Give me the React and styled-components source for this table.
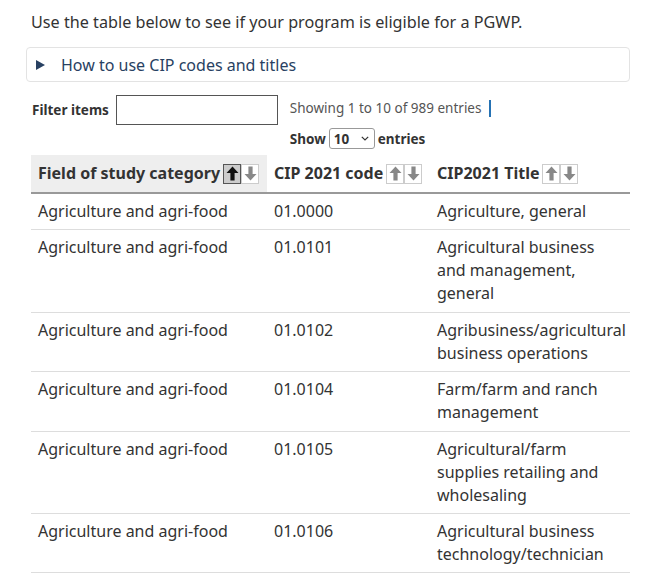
import { styled, createGlobalStyle } from "styled-components";

const GlobalStyle = createGlobalStyle`
    body {
        margin: 0;
        background: #fff;
        font-family: "Noto Sans", "DejaVu Sans", sans-serif;
        color: #333;
    }
`;

const rows = [
    ["Agriculture and agri-food", "01.0000", "Agriculture, general"],
    ["Agriculture and agri-food", "01.0101", "Agricultural business and management, general"],
    ["Agriculture and agri-food", "01.0102", "Agribusiness/agricultural business operations"],
    ["Agriculture and agri-food", "01.0104", "Farm/farm and ranch management"],
    ["Agriculture and agri-food", "01.0105", "Agricultural/farm supplies retailing and wholesaling"],
    ["Agriculture and agri-food", "01.0106", "Agricultural business technology/technician"],
];

const Arrow = ({ down, color }) => (
    <svg width="13" height="15" viewBox="0 0 13 15">
        <g transform={down ? "rotate(180 6.5 7.5)" : undefined}>
            <path d="M6.5 0.5 L12.5 7 L8.6 7 L8.6 14.5 L4.4 14.5 L4.4 7 L0.5 7 Z" fill={color} />
        </g>
    </svg>
);

const SortButtons = ({ active }) => (
    <SortGroup>
        <SortBtn $active={active}>
            <Arrow color={active ? "#111" : "#888"} />
        </SortBtn>
        <SortBtn>
            <Arrow down color="#888" />
        </SortBtn>
    </SortGroup>
);

const App = () => {
    return (
        <Page>
            <GlobalStyle />
            <Intro>Use the table below to see if your program is eligible for a PGWP.</Intro>
            <Details>
                <Summary>
                    <Triangle />
                    How to use CIP codes and titles
                </Summary>
            </Details>

            <Controls>
                <FilterLabel>
                    Filter items
                    <FilterInput type="text" />
                </FilterLabel>
                <Info>
                    <Showing>
                        Showing 1 to 10 of 989 entries
                        <Caret />
                    </Showing>
                    <Length>
                        Show
                        <SelectBox>
                            10
                            <Chevron viewBox="0 0 8 5" width="8" height="5">
                                <path d="M0.8 0.8 L4 4 L7.2 0.8" fill="none" stroke="#333" strokeWidth="1.2" />
                            </Chevron>
                        </SelectBox>
                        entries
                    </Length>
                </Info>
            </Controls>

            <Table>
                <colgroup>
                    <col style={{ width: 236 }} />
                    <col style={{ width: 163 }} />
                    <col style={{ width: 200 }} />
                </colgroup>
                <thead>
                    <tr>
                        <Th $sorted>
                            <HeadInner>Field of study category<SortButtons active /></HeadInner>
                        </Th>
                        <Th>
                            <HeadInner>CIP 2021 code<SortButtons /></HeadInner>
                        </Th>
                        <Th>
                            <HeadInner>CIP2021 Title<SortButtons /></HeadInner>
                        </Th>
                    </tr>
                </thead>
                <tbody>
                    {rows.map(([field, code, title]) => (
                        <tr key={code}>
                            <Td>{field}</Td>
                            <Td>{code}</Td>
                            <Td>{title}</Td>
                        </tr>
                    ))}
                </tbody>
            </Table>
        </Page>
    );
};

const Page = styled.div`
    width: 660px;
    height: 584px;
    overflow: hidden;
    box-sizing: border-box;
    padding: 11px 30px 0 31px;
`;

const Intro = styled.p`
    margin: 0;
    font-size: 16.2px;
    line-height: 23px;
    color: #333;
`;

const Details = styled.details`
    margin: 13px 0 0 -5px;
    border: 1px solid #e3e3e3;
    border-radius: 4px;
`;

const Summary = styled.summary`
    list-style: none;
    display: flex;
    align-items: center;
    height: 33px;
    padding-left: 9px;
    font-size: 16px;
    color: #284162;
    cursor: pointer;

    &::-webkit-details-marker { display: none; }
`;

const Triangle = styled.span`
    width: 0;
    height: 0;
    border-top: 5px solid transparent;
    border-bottom: 5px solid transparent;
    border-left: 9px solid #284162;
    margin-right: 16px;
`;

const Controls = styled.div`
    display: flex;
    align-items: flex-start;
    margin-top: 13px;
`;

const FilterLabel = styled.label`
    display: flex;
    align-items: center;
    gap: 7px;
    font-size: 13.5px;
    font-weight: bold;
    color: #333;
    padding-left: 1px;
`;

const FilterInput = styled.input`
    width: 154px;
    height: 28px;
    margin: 0;
    padding: 0 3px;
    box-sizing: content-box;
    border: 1px solid #555;
    border-radius: 0;
    background: #fff;
    font-family: inherit;

    &:focus { outline: none; }
`;

const Info = styled.div`
    display: flex;
    flex-direction: column;
    gap: 11px;
    margin-left: 12px;
    margin-top: 4px;
`;

const Showing = styled.div`
    display: flex;
    align-items: center;
    font-size: 13.5px;
    line-height: 18px;
    color: #555;
`;

const Caret = styled.span`
    display: inline-block;
    width: 2px;
    height: 17px;
    background: #2572b4;
    margin-left: 8px;
`;

const Length = styled.div`
    display: flex;
    align-items: center;
    gap: 3px;
    font-size: 13.5px;
    font-weight: bold;
    color: #333;
`;

const SelectBox = styled.span`
    display: inline-flex;
    align-items: center;
    justify-content: space-between;
    width: 35px;
    height: 19px;
    padding: 0 5px 0 4px;
    border: 1px solid #999;
    border-radius: 3px;
    font-size: 13.5px;
    font-weight: bold;
    color: #333;
`;

const Chevron = styled.svg`
    display: block;
`;

const Table = styled.table`
    width: 599px;
    margin-top: 6px;
    border-collapse: collapse;
    table-layout: fixed;
    font-size: 16px;
    line-height: 23px;
    color: #333;
`;

const Th = styled.th`
    text-align: left;
    font-weight: bold;
    padding: 7px 2px 7px 7px;
    height: 22px;
    background: ${({ $sorted }) => ($sorted ? "#eee" : "transparent")};
    border-bottom: 2px solid #999;
    white-space: nowrap;
`;

const HeadInner = styled.div`
    display: flex;
    align-items: center;
`;

const SortGroup = styled.span`
    display: inline-flex;
    margin-left: 3px;
`;

const SortBtn = styled.span`
    display: inline-flex;
    align-items: center;
    justify-content: center;
    width: 18px;
    height: 20px;
    box-sizing: border-box;
    border: 1px solid ${({ $active }) => ($active ? "#555" : "#ccc")};
    background: ${({ $active }) => ($active ? "#ccc" : "#fff")};
`;

const Td = styled.td`
    vertical-align: top;
    padding: 6px 4px 6.4px 7px;
    border-bottom: 1px solid #ddd;
`;

export default App;
